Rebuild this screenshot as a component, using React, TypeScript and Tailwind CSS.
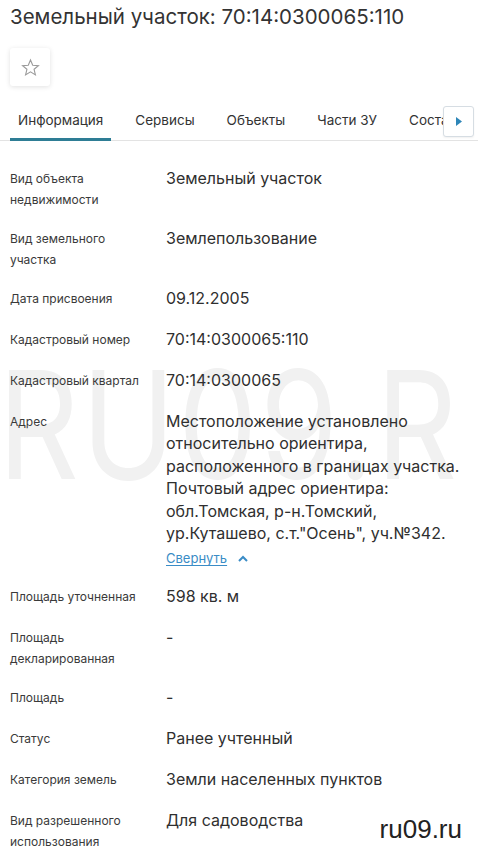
import React from "react";

const rows: { label: string; value: string }[] = [
  { label: "Вид объекта недвижимости", value: "Земельный участок" },
  { label: "Вид земельного участка", value: "Землепользование" },
  { label: "Дата присвоения", value: "09.12.2005" },
  { label: "Кадастровый номер", value: "70:14:0300065:110" },
  { label: "Кадастровый квартал", value: "70:14:0300065" },
];

const rowsAfter: { label: string; value: string }[] = [
  { label: "Площадь уточненная", value: "598 кв. м" },
  { label: "Площадь декларированная", value: "-" },
  { label: "Площадь", value: "-" },
  { label: "Статус", value: "Ранее учтенный" },
  { label: "Категория земель", value: "Земли населенных пунктов" },
  { label: "Вид разрешенного использования", value: "Для садоводства" },
];

const tabs = ["Информация", "Сервисы", "Объекты", "Части ЗУ", "Состав"];

function Row({ label, children }: { label: string; children: React.ReactNode }) {
  return (
    <div className="flex min-h-[41px] pb-[16px]">
      <div className="w-[156px] shrink-0 pr-4 pt-[2px] text-[12px] leading-[21px] text-[#3a3a3a]">
        {label}
      </div>
      <div className="flex-1 pt-[1px] text-[16px] leading-[22px] text-[#2f2f2f]">{children}</div>
    </div>
  );
}

export default function App() {
  return (
    <div className="relative h-[857px] w-[478px] overflow-hidden bg-white font-['Inter',sans-serif]">
      {/* watermark */}
      <div className="pointer-events-none absolute left-[-2px] top-[345px] origin-left scale-x-[0.84] select-none whitespace-nowrap text-[150px] font-normal leading-[160px] tracking-[3px] text-[#f1f1f1]">
        RU09.R
      </div>

      <div className="relative px-[10px]">
        <h1 className="pt-[2px] text-[20.5px] leading-[30px] text-[#333]">
          Земельный участок: 70:14:0300065:110
        </h1>

        <div className="mt-[16px] flex h-[38px] w-[40px] items-center justify-center rounded-[3px] bg-white shadow-[0_1px_5px_rgba(0,0,0,0.12)]">
          <svg width="19" height="19" viewBox="0 0 24 24" fill="none" stroke="#9a9a9a" strokeWidth="1.4" strokeLinejoin="miter">
            <polygon points="12,2.5 14.8,9.2 22,9.7 16.5,14.3 18.2,21.3 12,17.5 5.8,21.3 7.5,14.3 2,9.7 9.2,9.2" />
          </svg>
        </div>

        <div className="relative -mx-[10px] mt-[18px] border-b border-[#e3e3e3]">
          <div className="flex h-[36px] items-start gap-[16px] pl-[10px] text-[13.5px] text-[#333]">
            {tabs.map((t, i) => (
              <div
                key={t}
                className={
                  i === 0
                    ? "shrink-0 border-b-[3px] border-[#2e7d95] px-[8px] pt-[6px] pb-[8px]"
                    : "shrink-0 px-[8px] pt-[6px] pb-[8px]"
                }
              >
                {t}
              </div>
            ))}
          </div>
          <div className="absolute right-[4px] top-[2px] flex h-[31px] w-[31px] items-center justify-center rounded-[3px] border border-[#d6dde3] bg-white shadow-[0_1px_2px_rgba(0,0,0,0.06)]">
            <svg width="6" height="9" viewBox="0 0 6 9">
              <polygon points="0,0 6,4.5 0,9" fill="#2e86b8" />
            </svg>
          </div>
        </div>

        <div className="mt-[25px]">
          {rows.map((r) => (
            <Row key={r.label} label={r.label}>
              {r.value}
            </Row>
          ))}
          <div className="flex pb-[16px]">
            <div className="w-[156px] shrink-0 pr-4 pt-[2px] text-[12px] leading-[21px] text-[#3a3a3a]">Адрес</div>
            <div className="flex-1 pt-[1px] text-[16px] leading-[22.4px] text-[#2f2f2f]">
              <div>
                Местоположение установлено относительно ориентира, расположенного в границах участка.
                Почтовый адрес ориентира: обл.Томская, р-н.Томский, ур.Куташево, с.т."Осень", уч.№342.
              </div>
              <div className="mt-[4px] flex items-center gap-[11px] text-[13px] leading-[20px] text-[#3a8cc6]">
                <span className="underline underline-offset-2">Свернуть</span>
                <svg width="10" height="7" viewBox="0 0 10 7" fill="none" stroke="#3a8cc6" strokeWidth="2">
                  <polyline points="1,6 5,2 9,6" />
                </svg>
              </div>
            </div>
          </div>
          {rowsAfter.map((r) => (
            <Row key={r.label} label={r.label}>
              {r.value}
            </Row>
          ))}
        </div>
      </div>

      <div className="absolute right-[16px] top-[813px] font-['Liberation_Sans',sans-serif] text-[26px] leading-[32px] text-[#222]">
        ru09.ru
      </div>
    </div>
  );
}
